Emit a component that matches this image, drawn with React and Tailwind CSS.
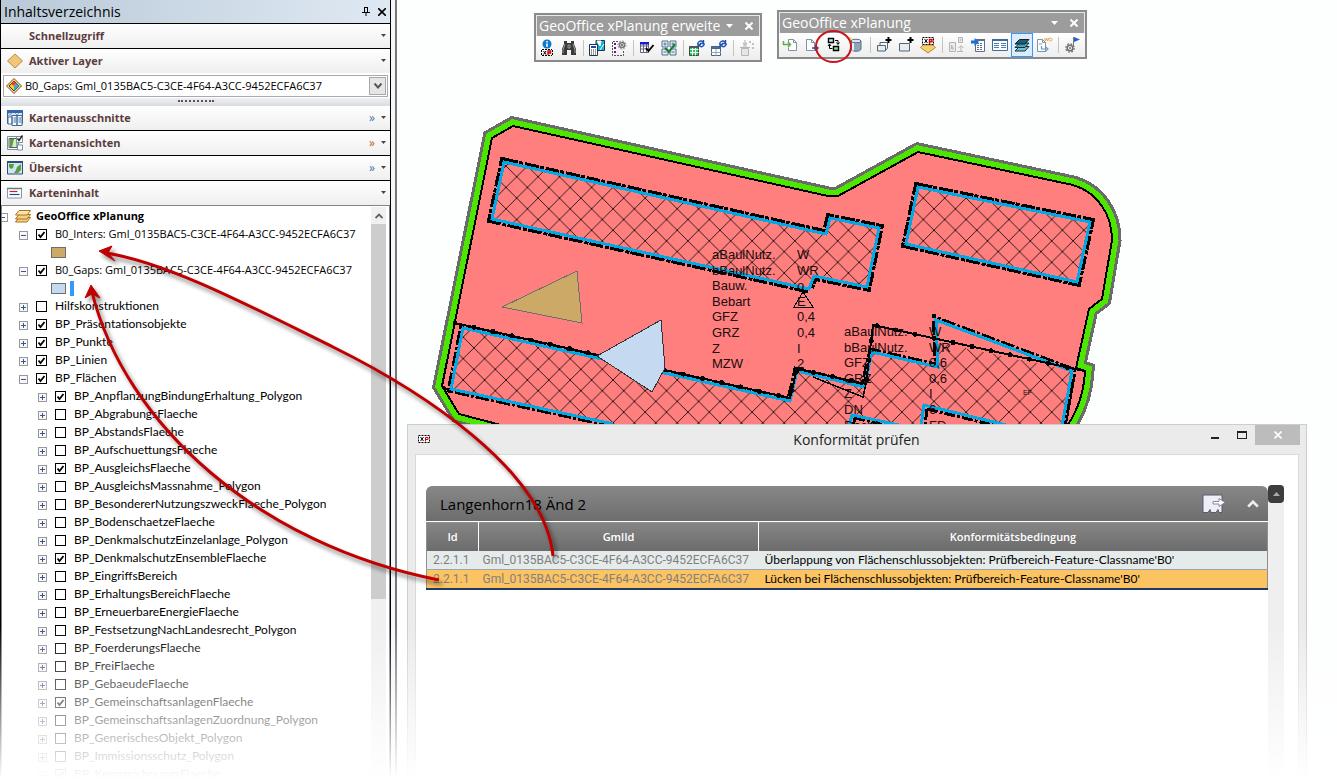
import { useState } from "react";

const LAYER_ID = "Gml_0135BAC5-C3CE-4F64-A3CC-9452ECFA6C37";

const treeItems = [
  { level: 1, name: `B0_Inters: ${LAYER_ID}`, open: true, checked: true, swatch: "tan" },
  { level: 1, name: `B0_Gaps: ${LAYER_ID}`, open: true, checked: true, swatch: "blue" },
  { level: 1, name: "Hilfskonstruktionen" },
  { level: 1, name: "BP_Präsentationsobjekte", checked: true },
  { level: 1, name: "BP_Punkte", checked: true },
  { level: 1, name: "BP_Linien", checked: true },
  { level: 1, name: "BP_Flächen", open: true, checked: true },
  { level: 2, name: "BP_AnpflanzungBindungErhaltung_Polygon", checked: true },
  { level: 2, name: "BP_AbgrabungsFlaeche" },
  { level: 2, name: "BP_AbstandsFlaeche" },
  { level: 2, name: "BP_AufschuettungsFlaeche" },
  { level: 2, name: "BP_AusgleichsFlaeche", checked: true },
  { level: 2, name: "BP_AusgleichsMassnahme_Polygon" },
  { level: 2, name: "BP_BesondererNutzungszweckFlaeche_Polygon" },
  { level: 2, name: "BP_BodenschaetzeFlaeche" },
  { level: 2, name: "BP_DenkmalschutzEinzelanlage_Polygon" },
  { level: 2, name: "BP_DenkmalschutzEnsembleFlaeche", checked: true },
  { level: 2, name: "BP_EingriffsBereich" },
  { level: 2, name: "BP_ErhaltungsBereichFlaeche" },
  { level: 2, name: "BP_ErneuerbareEnergieFlaeche" },
  { level: 2, name: "BP_FestsetzungNachLandesrecht_Polygon" },
  { level: 2, name: "BP_FoerderungsFlaeche" },
  { level: 2, name: "BP_FreiFlaeche" },
  { level: 2, name: "BP_GebaeudeFlaeche" },
  { level: 2, name: "BP_GemeinschaftsanlagenFlaeche", checked: true },
  { level: 2, name: "BP_GemeinschaftsanlagenZuordnung_Polygon" },
  { level: 2, name: "BP_GenerischesObjekt_Polygon" },
  { level: 2, name: "BP_Immissionsschutz_Polygon" },
  { level: 2, name: "BP_KennzeichnungsFlaeche", checked: true },
];

const results = [
  { id: "2.2.1.1", text: "Überlappung von Flächenschlussobjekten: Prüfbereich-Feature-Classname'B0'" },
  { id: "2.2.1.1", text: "Lücken bei Flächenschlussobjekten: Prüfbereich-Feature-Classname'B0'", active: true },
];

// Small drawings used in the toolbars, all on a 16x16 grid
const icons = {
  info: (
    <>
      <circle cx="8" cy="4" r="4.500" fill="#0a7bd0" />
      <path d="M8 1v1.400M8 3.400v3.400" stroke="#fff" strokeWidth="1.600" />
      <path d="M3 9.500h10M3 15.500h10M2.500 10v6M13.500 10v6" stroke="#000" strokeDasharray="2 1" />
      <path d="M4.500 11l2.500 3.500M7 11l-2.500 3.500" stroke="#000" />
      <path d="M9 15v-4h2.500v2H9" stroke="#d00" fill="none" strokeWidth="1.400" />
    </>
  ),
  binoculars: (
    <>
      <path d="M3 1h3v2h4V1h3v3l2 5v6h-5v-5H6v5H1V9l2-5z" fill="#3a3a3a" />
      <path d="M4 4L2 10v3M12 4l2 6v3M7 5h2v3H7z" stroke="#9a9a9a" fill="none" />
    </>
  ),
  calc: (
    <>
      <path d="M7 .5h8.500v10H7z" fill="#12b5d8" stroke="#234" />
      <path d="M8 1l3 5 1-5zM15 4l-4 6" fill="#fff" stroke="#fff" />
      <path d="M.5 4.500h8v11h-8z" fill="#fff" stroke="#234" />
      <path d="M2 6h5v2H2z" fill="#1d49a8" />
      <path d="M2 10h5M2 12h5M2 14h5" stroke="#234" strokeDasharray="1 1" />
    </>
  ),
  formGear: (
    <>
      <path d="M7 1.500H1.500v14h11V11" fill="none" stroke="#555" strokeDasharray="2 1" />
      <path d="M3 3h2v2H3zM3 7h2v2H3zM3 11h2v2H3z" fill="#8a1070" />
      <circle cx="11" cy="5" r="2.500" fill="none" stroke="#777" strokeWidth="1.500" />
      <circle cx="11" cy="5" r="4" fill="none" stroke="#777" strokeDasharray="1.600 1.500" />
      <circle cx="11" cy="5" r="1" fill="#555" />
    </>
  ),
  gridCheck: (
    <>
      <path d="M1.500 2.500h8v10h-8zM4.500 2v10.500M7.500 2v10.500M1 6h8.500M1 9h8.500" fill="#fff" stroke="#667" />
      <path d="M1 2h9v2.500H1z" fill="#1818e0" />
      <path d="M7 8l2.500 3 5-6" fill="none" stroke="#000" strokeWidth="1.800" />
    </>
  ),
  tilesCheck: (
    <>
      <path d="M1 1h6v6H1zM9 1h6v6H9zM1 9h6v6H1zM9 9h6v6H9z" fill="#e4edf5" stroke="#51708c" />
      <path d="M2.500 4h3M4 2.500v3M10.500 4h3M12 2.500v3M2.500 12h3M10.500 12h3" stroke="#51708c" />
      <path d="M4 8l4 4 6-8" fill="none" stroke="#157c2b" strokeWidth="2" />
    </>
  ),
  gridSync: (
    <>
      <path d="M.5 6.500h9v9h-9z" fill="#35c55d" stroke="#444" />
      <path d="M3.500 7v8.500M6.500 7v8.500M1 9.500h8.500M1 12.500h8.500" stroke="#e9fff0" />
      <path d="M0 6h10v2H0z" fill="#555" />
      <path d="M8.500 4c1-3 3.500-4 5.500-2M14.500 0v3.500H11M15.500 3.500c-1 3.500-3.500 4-5.500 2M9 7.500V4.500h3" fill="none" stroke="#1d4fb5" strokeWidth="1.400" />
    </>
  ),
  tableSync: (
    <>
      <path d="M.5 6.500h9v9h-9z" fill="#fff" stroke="#4a6682" />
      <path d="M.5 6.500h9v2h-9z" fill="#3d73a8" stroke="#4a6682" />
      <path d="M5 9v7M0 12.500h10" stroke="#8aa6c2" />
      <path d="M8.500 4c1-3 3.500-4 5.500-2M14.500 0v3.500H11M15.500 3.500c-1 3.500-3.500 4-5.500 2M9 7.500V4.500h3" fill="none" stroke="#1d4fb5" strokeWidth="1.400" />
    </>
  ),
  bin: (
    <>
      <path d="M2.500 8.500h7v7h-7zM1 7.500h10M4 6h4" fill="#e6e6e6" stroke="#b6b6b6" />
      <path d="M6 0v5M4 3l2 2 2-2" fill="none" stroke="#bdbdbd" strokeWidth="1.300" />
      <path d="M10 1h2v2h-2zM13 3h2v2h-2zM13 7h2v2h-2z" fill="#c2c2c2" />
    </>
  ),
  pageIn: (
    <>
      <path d="M6.500 5V2.500h5l3 3v8h-8v-3" fill="#fff" stroke="#8093a2" />
      <path d="M11.500 2.500v3h3" fill="none" stroke="#8093a2" />
      <path d="M1 7.500h7M6 5l2.500 2.500L6 10M1.500 4v4" fill="none" stroke="#5cae4d" strokeWidth="1.500" />
    </>
  ),
  pageOut: (
    <>
      <path d="M2.500 2.500h5l3 3v8h-8z" fill="#fff" stroke="#8093a2" />
      <path d="M7.500 2.500v3h3" fill="none" stroke="#8093a2" />
      <path d="M8 11h5M11 8.500l3 2.500-3 2.500" fill="none" stroke="#1d4f9a" strokeWidth="1.500" />
    </>
  ),
  transfer: (
    <>
      <path d="M2.500 1.500h5v4h-5z" fill="#bfe8fb" stroke="#000" strokeWidth="1.400" />
      <path d="M7.500 9.500h5v4h-5z" fill="#8fdc9c" stroke="#000" strokeWidth="1.400" />
      <path d="M9 3.500h3V7M10.500 5.500l1.500 2 1.500-2M6.500 11.500h-3V8M2 9l1.500-2L5 9" fill="none" stroke="#000" />
    </>
  ),
  database: (
    <>
      <path d="M3 4v8c0 3 10 3 10 0V4z" fill="#8fa3ba" stroke="#5c6f88" />
      <path d="M5 6v7.500" stroke="#e7eef5" strokeWidth="2" />
      <ellipse cx="8" cy="4" rx="5" ry="1.800" fill="#dbe4ee" stroke="#5c6f88" />
      <path d="M2 0v4.500M0 2.200h4.500" stroke="#f6c945" strokeWidth="1.300" />
    </>
  ),
  layersAdd: (
    <>
      <path d="M4 9V5.500h7.500V11L10 13" fill="#fff" stroke="#4f6679" strokeLinejoin="round" />
      <path d="M1.500 8.500h8V14h-8z" fill="#e6eef3" stroke="#4f6679" strokeLinejoin="round" />
      <path d="M12.500 0v6M9.500 3h6" stroke="#000" strokeWidth="2" />
    </>
  ),
  layerAdd: (
    <>
      <path d="M1.500 6.500h10V14h-10z" fill="#e6eef3" stroke="#4f6679" strokeLinejoin="round" />
      <path d="M12.500 0v6M9.500 3h6" stroke="#000" strokeWidth="2" />
    </>
  ),
  xpLayer: (
    <>
      <path d="M3 8h10l2.500 2.500L8 16 .5 10.500z" fill="#f6cf72" stroke="#b98a30" />
      <path d="M2.500.5h11v7h-11z" fill="#fff" stroke="#000" strokeDasharray="2 1" />
      <path d="M4.500 2l3 4M7.500 2l-3 4" stroke="#000" />
      <path d="M9.500 7V2.500H12v2.200H9.500" fill="none" stroke="#d00" strokeWidth="1.400" />
    </>
  ),
  blocks: (
    <>
      <path d="M1.500 5.500h6v9h-6zM10.500.5h4v5h-4z" fill="#ececec" stroke="#b3b3b3" />
      <path d="M3.500 12V8l2 4zM12 4l1-2M13 15V9M10.500 11L13 8.500l2.500 2.500M9 14.500h6" fill="none" stroke="#b3b3b3" />
    </>
  ),
  listImport: (
    <>
      <path d="M5.500 2.500h9v12h-9z" fill="#fff" stroke="#5b7088" />
      <path d="M7 6.500h6M7 8.500h6M7 10.500h6M7 12.500h6" stroke="#5b7088" strokeDasharray="2 1" />
      <path d="M5 2h10v2H5z" fill="#5b7088" />
      <path d="M1 3.500h3.500V1L9 5l-4.500 4V6.500H1z" fill="#1d6fd0" />
    </>
  ),
  table: (
    <>
      <path d="M.5 2.500h15v11H.5z" fill="#fff" stroke="#3f6d9b" />
      <path d="M0 2h16v2H0z" fill="#3f6d9b" />
      <path d="M2 6.500h5M2 8.500h5M2 10.500h5M9 6.500h5M9 8.500h5M9 10.500h5" stroke="#4c7fae" />
    </>
  ),
  stack: (
    <>
      <path d="M5.500 9.500h9.500L11 14H1z" fill="#6fc3d4" stroke="#12303c" />
      <path d="M5.500 6h9.500L11 10.500H1z" fill="#4fa0b4" stroke="#12303c" />
      <path d="M5.500 2.500h9.500L11 7H1z" fill="#1f5d72" stroke="#0c222c" />
    </>
  ),
  export: (
    <>
      <path d="M1.500 2.500h5l3 3v9h-8z" fill="#fff" stroke="#8093a2" />
      <path d="M6.500 2.500v3h3M3 7h3" fill="none" stroke="#8093a2" />
      <path d="M8.500 1l1 3 1-3 1 3 1-3" fill="none" stroke="#e7a95a" />
      <circle cx="14.500" cy="2.500" r="1.500" fill="none" stroke="#e7a95a" />
      <path d="M5.500 9v3H10M9 9.500l3 2.500-3 2.500" fill="none" stroke="#5b98c8" strokeWidth="1.200" />
    </>
  ),
  gearFlag: (
    <>
      <circle cx="6" cy="11" r="2.800" fill="none" stroke="#6d6d6d" strokeWidth="1.500" />
      <circle cx="6" cy="11" r="4.200" fill="none" stroke="#6d6d6d" strokeWidth="1.200" strokeDasharray="1.800 1.500" />
      <circle cx="6" cy="11" r="1" fill="#6d6d6d" />
      <path d="M9.500 0v10" stroke="#777" />
      <path d="M10 0l6 2.500L10 5z" fill="#1c63d6" />
    </>
  ),
};

function Icon({ name }) {
  return (
    <svg viewBox="0 0 16 16" className="size-4 overflow-visible" fill="none" aria-hidden="true">
      {icons[name]}
    </svg>
  );
}

function Caret({ className }) {
  return (
    <svg viewBox="0 0 7 4" className={className} aria-hidden="true">
      <path d="M0 0h7L3.500 4z" fill="currentColor" />
    </svg>
  );
}

function Toolbar({ title, groups, selected, className }) {
  return (
    <section
      aria-label={title}
      className={`absolute border-2 border-[#8a8a8a] bg-[#9c9c9c] ${className}`}
    >
      <div className="flex h-[21px] items-center border border-b-0 border-[#e8e8e8] pl-0.5 text-sm text-white">
        <h2 className="min-w-0 flex-1 overflow-hidden whitespace-nowrap">{title}</h2>
        <button type="button" aria-label="Optionen" className="px-1.5">
          <Caret className="h-1 w-[7px]" />
        </button>
        <button type="button" aria-label="Schließen" className="px-1.5">
          <svg viewBox="0 0 8 8" className="size-2">
            <path d="M.5.5l7 7M7.500.5l-7 7" stroke="#fff" strokeWidth="2" />
          </svg>
        </button>
      </div>
      <div className="flex h-6 bg-linear-to-b from-white to-[#ededed]">
        {groups.map((group, i) => (
          <div key={i} className="flex">
            {i > 0 && <span className="my-1 mr-0.5 ml-[3px] w-px bg-[#c4c4c4]" />}
            {group.map((name) => (
              <button
                key={name}
                type="button"
                aria-label={name}
                className={`flex w-[22px] items-center justify-center ${
                  name === selected ? "border border-[#3399ff] bg-[#dcecfb]" : ""
                }`}
              >
                <Icon name={name} />
              </button>
            ))}
          </div>
        ))}
      </div>
    </section>
  );
}

const sectionIcons = {
  diamond: (
    <path d="M8 1l7.500 7L8 15 .5 8z" fill="#f3c677" stroke="#b58b45" />
  ),
  books: (
    <>
      <path d="M.5.500h15v13H.5z" fill="#dbe7f3" stroke="#3c5f8c" />
      <path d="M0 0h16v3H0z" fill="#3567a6" />
      <path d="M1 3l4 3M5 3L1 6M8 3l3 3M12 3l-3 3" stroke="#7ea0c4" />
      <path d="M1 7h4v7H1zM5 5.500h5v10H5zM10 5.500h5v10h-5z" fill="#fff" stroke="#3c6a9c" />
      <path d="M6.500 8H9M6.500 10H9M6.500 12H9M11.500 8H14M11.500 10H14M11.500 12H14" stroke="#3c6a9c" />
    </>
  ),
  views: (
    <>
      <path d="M.5 1.500h11v13H.5z" fill="#fff" stroke="#7b8f9f" />
      <path d="M2 3.500h8v9H2z" fill="#dcebc4" stroke="#4b6377" />
      <path d="M3 4h4l-1 4-1 4H3z" fill="#5f9b3a" />
      <path d="M9.500 1.500h6v6h-6zM10.500 10h5v5h-5z" fill="#fff" stroke="#7b8f9f" />
      <path d="M10.500 3.500l1.500 2 3.500-5" fill="none" stroke="#222" strokeWidth="1.500" />
    </>
  ),
  overview: (
    <>
      <path d="M.5 1.500h15v12.500H.5z" fill="#cfe6f5" stroke="#28507a" />
      <path d="M0 1h16v2H0z" fill="#28507a" />
      <path d="M2 4h5l-1 4-2 1-2-2zM10 7l4-3v6l-3 3H7l2-3z" fill="#5f9b3a" />
    </>
  ),
  content: (
    <>
      <path d="M.5 3.500h14v9.500H.5z" fill="#fff" stroke="#7f99a8" />
      <path d="M0 3.500h15" stroke="#5b8088" strokeWidth="1.500" />
      <path d="M2.500 6.500h8" stroke="#c22" strokeWidth="1.200" />
      <path d="M2.500 9.500h10" stroke="#1d4f9a" strokeWidth="1.200" />
    </>
  ),
};

function SectionHeader({ icon, title, more, moreClass, className }) {
  return (
    <div
      className={`flex items-center bg-linear-to-b from-white to-[#efefef] pr-1 pb-px pl-1.5 text-[#5b3d3d] ${className}`}
    >
      <span className="w-[22px]">
        {icon && (
          <svg viewBox="0 0 16 16" className="size-4" fill="none" aria-hidden="true">
            {sectionIcons[icon]}
          </svg>
        )}
      </span>
      <h2 className="flex-1 text-[11px] leading-4 font-bold">{title}</h2>
      {more && (
        <button type="button" aria-label="Mehr" className={`mr-1.5 text-xs leading-none ${moreClass}`}>
          »
        </button>
      )}
      <button type="button" aria-label={`${title} Menü`}>
        <Caret className="h-[3px] w-[5px]" />
      </button>
    </div>
  );
}

function Expander({ open }) {
  return (
    <button
      type="button"
      aria-label={open ? "Zuklappen" : "Aufklappen"}
      className="mt-[3px] flex size-[9px] shrink-0 items-center justify-center border border-[#989898] bg-[#f7f7f7]"
    >
      <svg viewBox="0 0 5 5" className="size-[5px]">
        <path d={open ? "M0 2.500h5" : "M0 2.500h5M2.500 0v5"} stroke="#3b5496" />
      </svg>
    </button>
  );
}

function TreeRow({ item }) {
  return (
    <li>
      <div
        className={`flex h-[18px] items-center ${item.level === 1 ? "pl-[17px]" : "pl-9"}`}
      >
        <Expander open={item.open} />
        <label className="flex items-center pl-2">
          <span className="relative size-[11px] shrink-0">
            <input
              type="checkbox"
              defaultChecked={item.checked}
              className="peer block size-[11px] appearance-none border border-black bg-white"
            />
            <svg
              viewBox="0 0 11 11"
              className="pointer-events-none invisible absolute inset-0 size-[11px] peer-checked:visible"
            >
              <path d="M2.500 5.500l2 2.500 4-5" fill="none" stroke="#000" strokeWidth="1.800" />
            </svg>
          </span>
          {/* layer ids are long, so those rows use the smaller face */}
          <span
            className={`pl-2 whitespace-nowrap ${
              item.swatch ? "font-['Open_Sans',sans-serif] text-[11px]" : ""
            }`}
          >
            {item.name}
          </span>
        </label>
      </div>
      {item.swatch && (
        <div className="flex h-[18px] items-center gap-1 pl-[49px]">
          <span
            className={`h-[11px] w-[15px] border border-[#6e6e6e] ${
              item.swatch === "tan" ? "bg-[#cda966]" : "bg-[#c5d9f1]"
            }`}
          />
          {item.swatch === "blue" && <span className="h-[15px] w-1 bg-[#3399ff]" />}
        </div>
      )}
    </li>
  );
}

function Sidebar() {
  const [layer, setLayer] = useState("gaps");

  return (
    <aside className="flex w-[397px] shrink-0 border-r-2 border-[#777] bg-[#f4f6f8] pr-1">
      <div className="flex min-w-0 flex-1 flex-col border-x border-black bg-white">
        <div className="flex h-[23px] items-center gap-2 bg-linear-to-r from-[#b9c9d8] to-[#dfe9f3] pr-1 pl-[3px] text-sm text-black">
          <h1 className="flex-1">Inhaltsverzeichnis</h1>
          <button type="button" aria-label="Anheften">
            <svg viewBox="0 0 8 9" className="h-[9px] w-2">
              <path d="M2.500 0v5M5.500 0v5M2 .5h4M0 5.500h8M4 6v3" stroke="#000" />
              <path d="M5 0h1v5H5z" />
            </svg>
          </button>
          <button type="button" aria-label="Schließen">
            <svg viewBox="0 0 8 8" className="size-2">
              <path d="M0 0l8 8M8 0L0 8" stroke="#000" strokeWidth="1.600" />
            </svg>
          </button>
        </div>
        <SectionHeader title="Schnellzugriff" className="h-[25px] border-t border-black" />
        <SectionHeader icon="diamond" title="Aktiver Layer" className="h-[25px] border-t border-black" />
        <div className="px-0.5 pt-0.5 pb-px">
          <div className="relative flex items-center border border-[#a9a9b4] bg-white">
            <svg viewBox="0 0 16 16" className="pointer-events-none absolute left-0.5 size-4" fill="none">
              <path d="M8 .5L15.500 8 8 15.500.5 8z" fill="#f7d58e" stroke="#7b4e17" />
              <path d="M8 3l5 5-5 5-5-5z" fill="#f5d21f" stroke="#333" />
              <path d="M8 3l2.500 2.500L8 8 5 6z" fill="#e5472d" />
              <path d="M8 8l2.500-2.500L13 8l-5 5z" fill="#3da7dd" />
            </svg>
            <select
              aria-label="Aktiver Layer"
              value={layer}
              onChange={(e) => setLayer(e.target.value)}
              className="h-5 w-full appearance-none bg-transparent pr-5 pl-[21px] text-[11px] text-black"
            >
              <option value="gaps">B0_Gaps: {LAYER_ID}</option>
              <option value="inters">B0_Inters: {LAYER_ID}</option>
            </select>
            <span className="pointer-events-none absolute right-px flex h-[18px] w-[17px] items-center justify-center border border-[#a8a8a8] bg-[#e6e6e6]">
              <svg viewBox="0 0 8 6" className="h-1.5 w-2">
                <path d="M.5.500L4 4.500 7.500.5" fill="none" stroke="#555" strokeWidth="2" />
              </svg>
            </span>
          </div>
        </div>
        <div className="flex h-2 justify-center bg-linear-to-b from-[#eef0f3] to-[#d9dde2]">
          <span className="mt-0.5 h-0.5 w-9 border-t-2 border-dotted border-[#6b5050]" />
        </div>
        <SectionHeader icon="books" title="Kartenausschnitte" more moreClass="text-[#4a6fb5]" className="h-6" />
        <SectionHeader icon="views" title="Kartenansichten" more moreClass="text-[#b5622d]" className="h-[25px] border-t border-black" />
        <SectionHeader icon="overview" title="Übersicht" more moreClass="text-[#4a6fb5]" className="h-[25px] border-t border-black" />
        <SectionHeader icon="content" title="Karteninhalt" className="h-[25px] border-t border-black" />

        <div className="flex h-[574px] overflow-hidden border border-b-0 border-[#82828c] pt-px pr-[3px]">
          <ul className="min-w-0 flex-1 font-['Lato',sans-serif] text-xs leading-[18px] text-black">
            <li className="flex h-[18px] items-center">
              <span className="mt-[3px] flex h-[9px] w-1.5 items-center border border-l-0 border-[#989898]">
                <span className="h-px w-[3px] bg-[#3b5496]" />
              </span>
              <svg viewBox="0 0 16 14" className="ml-[7px] h-3.5 w-4" fill="#f6cf83" stroke="#a9741f">
                <path d="M4 8.500h11.500L12 13H.5z" />
                <path d="M4 5.500h11.500L12 10H.5z" />
                <path d="M4 1.500h11.500L12 6H.5z" fill="#fbe2ae" />
              </svg>
              <span className="pl-[5px] font-['Open_Sans',sans-serif] text-[11px] font-bold">
                GeoOffice xPlanung
              </span>
            </li>
            {treeItems.map((item) => (
              <TreeRow key={item.name} item={item} />
            ))}
          </ul>
          <div className="flex w-[15px] flex-col bg-[#f0f0f0]">
            <button type="button" aria-label="Nach oben" className="flex h-[17px] items-center justify-center">
              <svg viewBox="0 0 8 6" className="h-1.5 w-2">
                <path d="M.5 5L4 1.500 7.500 5" fill="none" stroke="#606060" strokeWidth="1.800" />
              </svg>
            </button>
            <div className="h-[375px] bg-[#cdcdcd]" />
          </div>
        </div>
      </div>
    </aside>
  );
}

const PLOT =
  "M492 138L513 126L828 196H838L918 152L1073 185C1097 192 1112 214 1112 240L1102 299L1089 309L1076 368L1085 371C1084 390 1078 412 1064 430H520L459 414L442 386Z";

const buildings = [
  "M504 162L826 234L830 218L879 228L867 287L814 276L809 289L492 219Z",
  "M918 187L1090 222L1077 282L906 244Z",
];

const SOUTH_TOP =
  "M613 424L451 389L463 328L790 401L797 371L864 387L872 352L938 367L936 320L1072 371L1062 426";
const SOUTH_FILL =
  "M613 424L451 389L463 328L790 401L797 371L864 387L872 352L938 367L936 342L1072 371L1062 426H1010L924 405L921 426H908L852 415L849 426H620Z";

// Points along the terrace boundary that carry a dot every few metres
const KNOTS = "M455 323L790 398L797 369L866 384L873 325L1084 371";

const labelsWest = [
  ["aBaulNutz.", "W"],
  ["bBaulNutz.", "WR"],
  ["Bauw.", "o"],
  ["Bebart", "E"],
  ["GFZ", "0,4"],
  ["GRZ", "0,4"],
  ["Z", "I"],
  ["MZW", "2"],
];

const labelsEast = [
  ["aBaulNutz.", "W"],
  ["bBaulNutz.", "WR"],
  ["GFZ", "0,6"],
  ["GRZ", "0,6"],
  ["Z", "I"],
  ["DN", "6"],
  ["Dachf.", "FD"],
];

function MapLabels({ rows, x, valueX, y }) {
  return rows.map(([key, value], i) => (
    <g key={key + i}>
      <text x={x} y={y + i * 15.6}>{key}</text>
      <text x={valueX} y={y + i * 15.6}>{value}</text>
    </g>
  ));
}

function MapView() {
  return (
    <svg
      viewBox="397 0 940 424"
      className="block h-[424px] w-[940px] shrink-0"
      role="img"
      aria-label="Bebauungsplan"
    >
      <defs>
        <pattern id="hatch" x="516.700" y="176.700" width="21.400" height="21.400" patternUnits="userSpaceOnUse">
          <path d="M0 0L21.400 21.400M21.400 0L0 21.400" stroke="#000" strokeWidth="0.800" />
        </pattern>
      </defs>
      <g strokeLinejoin="miter" fill="none" shapeRendering="crispEdges">
        <path d={PLOT} stroke="#6b6b6b" strokeWidth="19" />
        <path d={PLOT} stroke="#4ce600" strokeWidth="13" />
        <path d={PLOT} fill="#ff7f7f" stroke="#000" strokeWidth="2" />

        {buildings.map((d) => (
          <g key={d}>
            <path d={d} stroke="#000" strokeWidth="9" strokeDasharray="14 1 4 2" />
            <path d={d} fill="#ff7f7f" />
            <path d={d} fill="url(#hatch)" stroke="#00a9e6" strokeWidth="3" />
          </g>
        ))}

        <path d={SOUTH_TOP} stroke="#000" strokeWidth="8" strokeDasharray="14 2 3 2" />
        <path d={SOUTH_FILL} fill="#ff7f7f" />
        <path d="M938 367L936 320L1072 371Z" fill="#ff7f7f" />
        <path d={SOUTH_FILL} fill="url(#hatch)" />
        <path d="M854 418L902 428M927 409L1005 428M855 418l-2 8M927 409l-2 17" stroke="#000" strokeWidth="3" strokeDasharray="11 2 3 2" />
        <path d={SOUTH_TOP} stroke="#00a9e6" strokeWidth="3" />
        <path d="M849 426L852 415L908 427M921 426L924 405L1010 426" stroke="#00a9e6" strokeWidth="3" />

        <path d={KNOTS} stroke="#000" strokeWidth="2" />
        <path d={KNOTS} stroke="#000" strokeWidth="5" strokeLinecap="round" strokeDasharray="0 19.500" />
        <path d="M813 377L863 397L866 384" stroke="#000" strokeWidth="1.500" />
        <path d="M442 386L451 392M1075 374L1066 424" stroke="#000" strokeWidth="2" />
        <circle cx="934" cy="316" r="2.500" fill="#000" />

        <path d="M502 307L577 271L582 323Z" fill="#cca966" stroke="#6e6e6e" />
        <path d="M597 356L661 320L665 368L652 392Z" fill="#c5d9f1" stroke="#333" />
        <path d="M803 292L794 307H813Z" stroke="#000" />
      </g>
      <g className="font-['Liberation_Sans',sans-serif] text-[13px]" fill="#1a0a0a">
        <MapLabels rows={labelsWest} x={712} valueX={797} y={259} />
        <MapLabels rows={labelsEast} x={844} valueX={929} y={336} />
        <text x="1023" y="395" className="text-[7px]">EF</text>
      </g>
    </svg>
  );
}

function Dialog() {
  return (
    <section
      aria-label="Konformität prüfen"
      className="mr-[30px] ml-2.5 flex flex-1 flex-col border border-[#cdcdcd] bg-[#ebebeb] px-[7px]"
    >
      <div className="-mr-px flex h-[29px] items-start">
        <svg viewBox="0 0 12 8" className="mt-2.5 ml-[3px] h-2 w-3" fill="none">
          <path d="M.5.500h11v7H.5z" fill="#fff" stroke="#000" strokeDasharray="2 1" />
          <path d="M2.500 2l3 4M5.500 2l-3 4" stroke="#000" />
          <path d="M7.500 6.500v-4H10v2H7.500" stroke="#d00" />
        </svg>
        <h2 className="flex-1 pt-0.5 pl-[84px] text-center text-sm leading-[26px] text-[#222]">
          Konformität prüfen
        </h2>
        <button type="button" aria-label="Minimieren" className="h-5 w-7 pt-1.5 pl-3">
          <span className="block h-0.5 w-2 bg-[#222]" />
        </button>
        <button type="button" aria-label="Maximieren" className="h-5 w-7 pl-2.5">
          <span className="block h-2 w-2.5 border border-t-2 border-[#222]" />
        </button>
        <button type="button" aria-label="Schließen" className="flex h-5 w-[45px] items-center justify-center bg-[#bcbcbc]">
          <svg viewBox="0 0 8 8" className="size-2">
            <path d="M.5.500l7 7M7.500.5l-7 7" stroke="#fff" strokeWidth="1.600" />
          </svg>
        </button>
      </div>
      <div className="flex flex-1 items-stretch border border-b-0 border-[#d9d9d9] bg-white pt-[30px] pr-3.5 pl-2.5">
        <div className="min-w-0 flex-1 pt-px">
          <div className="flex h-[35px] items-center rounded-t-md bg-linear-to-b from-[#888] to-[#6d6d6d] pr-2 pl-3.5">
            <h3 className="flex-1 pt-0.5 text-[15px] text-black">Langenhorn18 Änd 2</h3>
            <button type="button" aria-label="Exportieren">
              <svg viewBox="0 0 24 20" className="h-5 w-6" fill="none">
                <path d="M1 1h19v17.500h-3l-1-3-2 3H9l-1-3-2 3H1z" fill="#eeeef6" stroke="#5c5870" />
                <path d="M11 7.500h6V4.500l6 4-6 4v-2.500h-6z" fill="#fff" stroke="#8b87a0" />
              </svg>
            </button>
            <button type="button" aria-label="Einklappen" className="ml-5">
              <svg viewBox="0 0 14 9" className="h-2 w-3.5">
                <path d="M1.500 7.500L7 2l5.500 5.500" fill="none" stroke="#eee" strokeWidth="3" />
              </svg>
            </button>
          </div>
          <table className="mt-px w-full table-fixed border-collapse border border-[#8f8f8f] font-['Lato',sans-serif] text-xs leading-4">
            <thead>
              <tr className="h-7 bg-linear-to-b from-[#858585] to-[#6c6c6c] font-['Open_Sans',sans-serif] text-[11px] text-white">
                <th className="w-[52px] border-r border-white font-semibold">Id</th>
                <th className="w-[280px] border-r border-white font-semibold">GmlId</th>
                <th className="font-semibold">Konformitätsbedingung</th>
              </tr>
            </thead>
            <tbody>
              {results.map((row) => (
                <tr
                  key={row.text}
                  className={`h-[19px] ${
                    row.active ? "border-b-2 border-[#1f3b64] bg-[#fcc363]" : "border-b border-[#9aa5ac] bg-[#e4ebea]"
                  }`}
                >
                  <td className="p-0 pl-1.5 font-['Roboto',sans-serif] text-[#808080]">{row.id}</td>
                  <td className="p-0 pl-1 font-['Roboto',sans-serif] whitespace-nowrap text-[#808080]">{LAYER_ID}</td>
                  <td className="p-0 pl-1.5 whitespace-nowrap text-black">{row.text}</td>
                </tr>
              ))}
            </tbody>
          </table>
        </div>
        <div className="w-4 bg-[#efefef]">
          <button type="button" aria-label="Nach oben" className="flex h-[18px] w-4 items-center justify-center rounded-sm bg-[#3d3d3d] text-[#aaa]">
            <Caret className="h-1 w-[7px] rotate-180" />
          </button>
        </div>
      </div>
    </section>
  );
}

function Annotations() {
  return (
    <svg
      viewBox="0 0 1337 779"
      className="pointer-events-none absolute top-0 left-0 h-[779px] w-[1337px]"
      fill="none"
      aria-hidden="true"
    >
      <g className="drop-shadow-[3px_4px_2px_rgba(0,0,0,0.45)]" stroke="#c00000" strokeWidth="3">
        <path d="M553 556C545 470 420 390 333 347S165 262 106 253" />
        <path d="M99 251L112 246L108 253L115 261Z" fill="#c00000" strokeWidth="1" />
        <path d="M439 580C260 545 125 425 92 292" />
        <path d="M91 285L85 298L92 294L100 298Z" fill="#c00000" strokeWidth="1" />
      </g>
      <ellipse cx="833.500" cy="46.500" rx="17.500" ry="15.500" stroke="#c8141c" strokeWidth="2" />
    </svg>
  );
}

export default function App() {
  return (
    <div className="relative flex min-h-screen overflow-hidden bg-[#fdfefe] font-['Open_Sans','Noto_Sans',sans-serif]">
      <Sidebar />
      <main className="relative flex min-w-0 flex-1 flex-col">
        <MapView />
        <Toolbar
          title="GeoOffice xPlanung erweitert"
          className="top-[13px] left-[137px] w-[228px]"
          groups={[
            ["info", "binoculars"],
            ["calc", "formGear"],
            ["gridCheck", "tilesCheck"],
            ["gridSync", "tableSync"],
            ["bin"],
          ]}
        />
        <Toolbar
          title="GeoOffice xPlanung"
          className="top-2.5 left-[380px] w-[310px]"
          selected="stack"
          groups={[
            ["pageIn", "pageOut", "transfer", "database"],
            ["layersAdd", "layerAdd", "xpLayer"],
            ["blocks", "listImport", "table", "stack", "export"],
            ["gearFlag"],
          ]}
        />
        <Dialog />
      </main>
      <Annotations />
      <div className="pointer-events-none absolute inset-x-0 bottom-0 h-[154px] bg-linear-to-b from-white/0 to-white" />
    </div>
  );
}
